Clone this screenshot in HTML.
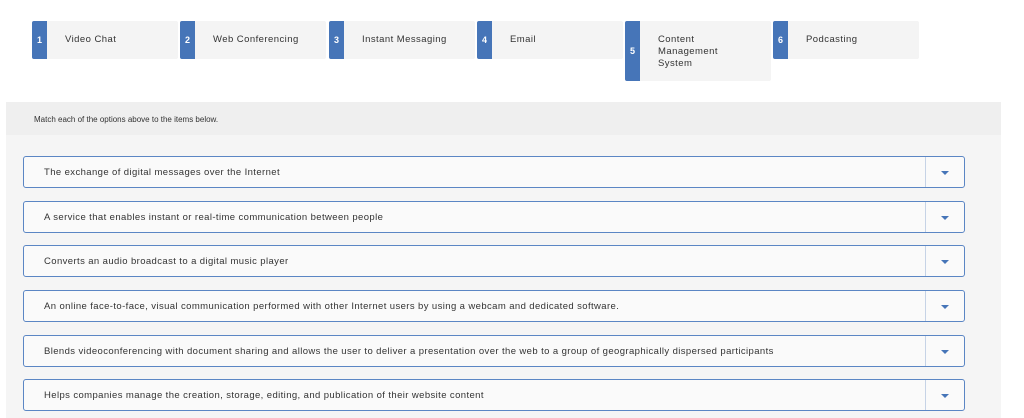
<!DOCTYPE html><html><head><style>
body{margin:0;width:1024px;height:418px;background:#fff;font-family:"Liberation Sans",sans-serif;position:relative;overflow:hidden;color:#333}
.t{position:absolute;top:21px;width:146px;height:38px;background:#f4f4f4;border-radius:2px;font-size:9.5px;letter-spacing:0.45px}
.t b{position:absolute;left:0;top:0;bottom:0;width:15px;background:#4675b8;color:#fff;font-size:9px;display:flex;align-items:center;justify-content:center;border-radius:2px 0 0 2px;letter-spacing:0}
.t span{position:absolute;left:33px;top:13px;line-height:12px}
.p{position:absolute;left:6px;top:102px;width:995px;height:316px;background:#f5f5f5}
.h{position:absolute;left:6px;top:102px;width:995px;height:33px;background:#efefef;font-size:8px}
.h span{position:absolute;left:28px;top:13px}
.r{position:absolute;left:23px;width:940px;height:30px;background:#fafafa;border:1px solid #5b86c4;border-radius:3px;font-size:9.5px;letter-spacing:0.4px}
.r span{position:absolute;left:20px;top:10px}
.r i{position:absolute;right:38px;top:0;bottom:0;border-left:1px solid #c6d3e6}
.r u{position:absolute;right:15px;top:14px;width:0;height:0;border-left:4px solid transparent;border-right:4px solid transparent;border-top:4px solid #4675b8}
</style></head><body>
<div class="t" style="left:32px"><b>1</b><span>Video Chat</span></div>
<div class="t" style="left:180px"><b>2</b><span>Web Conferencing</span></div>
<div class="t" style="left:329px"><b>3</b><span>Instant Messaging</span></div>
<div class="t" style="left:477px"><b>4</b><span>Email</span></div>
<div class="t" style="left:625px;height:60px"><b>5</b><span>Content<br>Management<br>System</span></div>
<div class="t" style="left:773px"><b>6</b><span>Podcasting</span></div>
<div class="p"></div>
<div class="h"><span>Match each of the options above to the items below.</span></div>
<div class="r" style="top:156px"><span>The exchange of digital messages over the Internet</span><i></i><u></u></div>
<div class="r" style="top:201px"><span>A service that enables instant or real-time communication between people</span><i></i><u></u></div>
<div class="r" style="top:245px"><span>Converts an audio broadcast to a digital music player</span><i></i><u></u></div>
<div class="r" style="top:290px"><span>An online face-to-face, visual communication performed with other Internet users by using a webcam and dedicated software.</span><i></i><u></u></div>
<div class="r" style="top:335px"><span>Blends videoconferencing with document sharing and allows the user to deliver a presentation over the web to a group of geographically dispersed participants</span><i></i><u></u></div>
<div class="r" style="top:379px"><span>Helps companies manage the creation, storage, editing, and publication of their website content</span><i></i><u></u></div>
</body></html>
